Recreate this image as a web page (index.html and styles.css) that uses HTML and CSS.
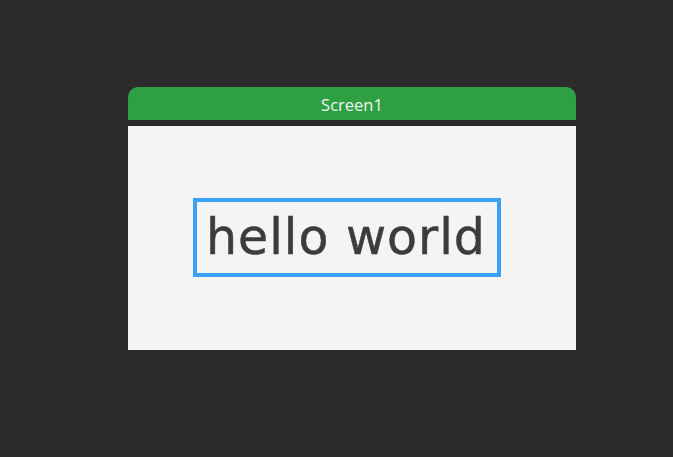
FILE: index.html
```html
<!DOCTYPE html>
<html lang="en">
<head>
    <meta charset="UTF-8">
    <title>Screen1</title>
    <link rel="stylesheet" href="styles.css">
</head>
<body>
    <div class="screen">
        <div class="titulo">Screen1</div>
        <div class="tela">
            <div class="rotulo">hello world</div>
        </div>
    </div>
</body>
</html>
```

FILE: styles.css
```css
*{
    margin: 0;
    padding: 0;
    box-sizing: border-box;
}

html, body{
    height: 100%;
    background-color: #2b2b2b;
}

body{
    padding: 87px 0 0 128px;
    font-family: "Open Sans", "Noto Sans", sans-serif;
}

.screen{
    width: 448px;
    display: flex;
    flex-direction: column;
    gap: 6px;
}

.titulo{
    height: 33px;
    background-color: #2ea043;
    border-radius: 10px 10px 0 0;
    color: #f4f4f4;
    font-size: 16.5px;
    line-height: 36px;
    text-align: center;
}

.tela{
    height: 224px;
    background-color: #f4f4f4;
    padding: 72px 0 0 65px;
}

.rotulo{
    width: 308px;
    height: 79px;
    border: 4px solid #3aa0f8;
    color: #3c3c3c;
    font-family: "DejaVu Sans", sans-serif;
    font-size: 49px;
    line-height: 71px;
    padding-left: 9px;
    letter-spacing: 1px;
    white-space: nowrap;
    -webkit-text-stroke: 0.5px #3c3c3c;
    filter: blur(0.6px);
}
```
